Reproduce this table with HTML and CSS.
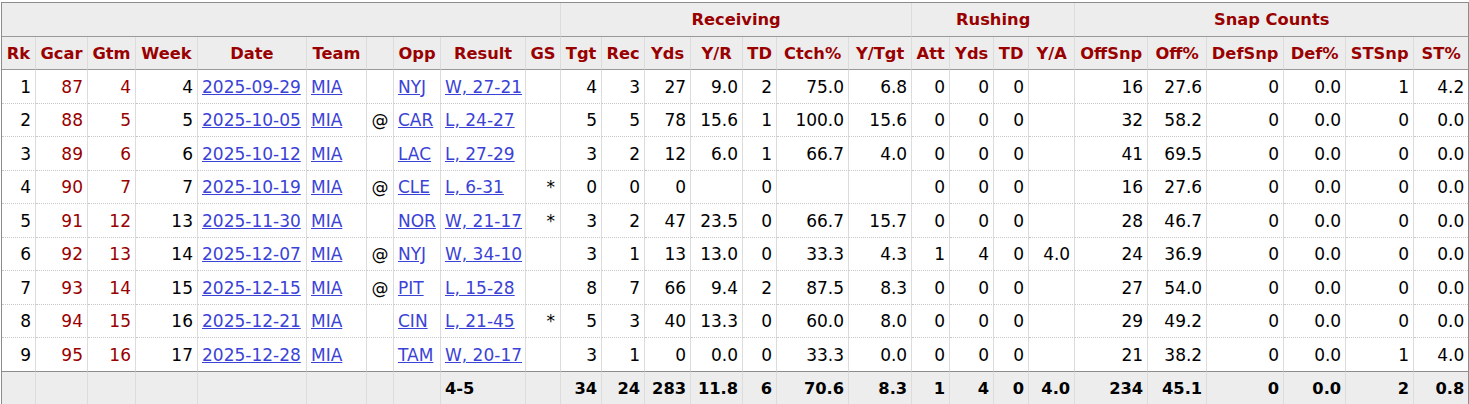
FILE: index.html
```html
<!DOCTYPE html>
<html>
<head>
<meta charset="utf-8">
<title>Game Log</title>
<link rel="stylesheet" href="styles.css">
</head>
<body>
<table class="stats">
  <colgroup>
    <col class="w34"><col class="w52"><col class="w48"><col class="w62"><col class="w109"><col class="w60"><col class="w27"><col class="w47"><col class="w85"><col class="w35">
    <col class="w41"><col class="w43"><col class="w46"><col class="w52"><col class="w34"><col class="w72"><col class="w63">
    <col class="w38"><col class="w44"><col class="w35"><col class="w46">
    <col class="w73"><col class="w59"><col class="w77"><col class="w62"><col class="w68"><col class="w54">
  </colgroup>
  <thead>
    <tr class="over">
      <th colspan="10"></th>
      <th colspan="7">Receiving</th>
      <th colspan="4">Rushing</th>
      <th colspan="6">Snap Counts</th>
    </tr>
    <tr class="heads">
      <th>Rk</th><th>Gcar</th><th>Gtm</th><th>Week</th><th>Date</th><th>Team</th><th></th><th>Opp</th><th>Result</th><th>GS</th>
      <th>Tgt</th><th>Rec</th><th>Yds</th><th>Y/R</th><th>TD</th><th>Ctch%</th><th>Y/Tgt</th>
      <th>Att</th><th>Yds</th><th>TD</th><th>Y/A</th>
      <th>OffSnp</th><th>Off%</th><th>DefSnp</th><th>Def%</th><th>STSnp</th><th>ST%</th>
    </tr>
  </thead>
  <tbody>
    <tr>
      <td class="r">1</td><td class="r red">87</td><td class="r red">4</td><td class="r">4</td><td><a href="#">2025-09-29</a></td><td><a href="#">MIA</a></td><td class="c"></td><td><a href="#">NYJ</a></td><td><a href="#">W, 27-21</a></td><td class="r gs"></td>
      <td class="r">4</td><td class="r">3</td><td class="r">27</td><td class="r">9.0</td><td class="r">2</td><td class="r">75.0</td><td class="r">6.8</td>
      <td class="r">0</td><td class="r">0</td><td class="r">0</td><td class="r"></td>
      <td class="r">16</td><td class="r">27.6</td><td class="r">0</td><td class="r">0.0</td><td class="r">1</td><td class="r">4.2</td>
    </tr>
    <tr>
      <td class="r">2</td><td class="r red">88</td><td class="r red">5</td><td class="r">5</td><td><a href="#">2025-10-05</a></td><td><a href="#">MIA</a></td><td class="c">@</td><td><a href="#">CAR</a></td><td><a href="#">L, 24-27</a></td><td class="r gs"></td>
      <td class="r">5</td><td class="r">5</td><td class="r">78</td><td class="r">15.6</td><td class="r">1</td><td class="r">100.0</td><td class="r">15.6</td>
      <td class="r">0</td><td class="r">0</td><td class="r">0</td><td class="r"></td>
      <td class="r">32</td><td class="r">58.2</td><td class="r">0</td><td class="r">0.0</td><td class="r">0</td><td class="r">0.0</td>
    </tr>
    <tr>
      <td class="r">3</td><td class="r red">89</td><td class="r red">6</td><td class="r">6</td><td><a href="#">2025-10-12</a></td><td><a href="#">MIA</a></td><td class="c"></td><td><a href="#">LAC</a></td><td><a href="#">L, 27-29</a></td><td class="r gs"></td>
      <td class="r">3</td><td class="r">2</td><td class="r">12</td><td class="r">6.0</td><td class="r">1</td><td class="r">66.7</td><td class="r">4.0</td>
      <td class="r">0</td><td class="r">0</td><td class="r">0</td><td class="r"></td>
      <td class="r">41</td><td class="r">69.5</td><td class="r">0</td><td class="r">0.0</td><td class="r">0</td><td class="r">0.0</td>
    </tr>
    <tr>
      <td class="r">4</td><td class="r red">90</td><td class="r red">7</td><td class="r">7</td><td><a href="#">2025-10-19</a></td><td><a href="#">MIA</a></td><td class="c">@</td><td><a href="#">CLE</a></td><td><a href="#">L, 6-31</a></td><td class="r gs">*</td>
      <td class="r">0</td><td class="r">0</td><td class="r">0</td><td class="r"></td><td class="r">0</td><td class="r"></td><td class="r"></td>
      <td class="r">0</td><td class="r">0</td><td class="r">0</td><td class="r"></td>
      <td class="r">16</td><td class="r">27.6</td><td class="r">0</td><td class="r">0.0</td><td class="r">0</td><td class="r">0.0</td>
    </tr>
    <tr>
      <td class="r">5</td><td class="r red">91</td><td class="r red">12</td><td class="r">13</td><td><a href="#">2025-11-30</a></td><td><a href="#">MIA</a></td><td class="c"></td><td><a href="#">NOR</a></td><td><a href="#">W, 21-17</a></td><td class="r gs">*</td>
      <td class="r">3</td><td class="r">2</td><td class="r">47</td><td class="r">23.5</td><td class="r">0</td><td class="r">66.7</td><td class="r">15.7</td>
      <td class="r">0</td><td class="r">0</td><td class="r">0</td><td class="r"></td>
      <td class="r">28</td><td class="r">46.7</td><td class="r">0</td><td class="r">0.0</td><td class="r">0</td><td class="r">0.0</td>
    </tr>
    <tr>
      <td class="r">6</td><td class="r red">92</td><td class="r red">13</td><td class="r">14</td><td><a href="#">2025-12-07</a></td><td><a href="#">MIA</a></td><td class="c">@</td><td><a href="#">NYJ</a></td><td><a href="#">W, 34-10</a></td><td class="r gs"></td>
      <td class="r">3</td><td class="r">1</td><td class="r">13</td><td class="r">13.0</td><td class="r">0</td><td class="r">33.3</td><td class="r">4.3</td>
      <td class="r">1</td><td class="r">4</td><td class="r">0</td><td class="r">4.0</td>
      <td class="r">24</td><td class="r">36.9</td><td class="r">0</td><td class="r">0.0</td><td class="r">0</td><td class="r">0.0</td>
    </tr>
    <tr>
      <td class="r">7</td><td class="r red">93</td><td class="r red">14</td><td class="r">15</td><td><a href="#">2025-12-15</a></td><td><a href="#">MIA</a></td><td class="c">@</td><td><a href="#">PIT</a></td><td><a href="#">L, 15-28</a></td><td class="r gs"></td>
      <td class="r">8</td><td class="r">7</td><td class="r">66</td><td class="r">9.4</td><td class="r">2</td><td class="r">87.5</td><td class="r">8.3</td>
      <td class="r">0</td><td class="r">0</td><td class="r">0</td><td class="r"></td>
      <td class="r">27</td><td class="r">54.0</td><td class="r">0</td><td class="r">0.0</td><td class="r">0</td><td class="r">0.0</td>
    </tr>
    <tr>
      <td class="r">8</td><td class="r red">94</td><td class="r red">15</td><td class="r">16</td><td><a href="#">2025-12-21</a></td><td><a href="#">MIA</a></td><td class="c"></td><td><a href="#">CIN</a></td><td><a href="#">L, 21-45</a></td><td class="r gs">*</td>
      <td class="r">5</td><td class="r">3</td><td class="r">40</td><td class="r">13.3</td><td class="r">0</td><td class="r">60.0</td><td class="r">8.0</td>
      <td class="r">0</td><td class="r">0</td><td class="r">0</td><td class="r"></td>
      <td class="r">29</td><td class="r">49.2</td><td class="r">0</td><td class="r">0.0</td><td class="r">0</td><td class="r">0.0</td>
    </tr>
    <tr>
      <td class="r">9</td><td class="r red">95</td><td class="r red">16</td><td class="r">17</td><td><a href="#">2025-12-28</a></td><td><a href="#">MIA</a></td><td class="c"></td><td><a href="#">TAM</a></td><td><a href="#">W, 20-17</a></td><td class="r gs"></td>
      <td class="r">3</td><td class="r">1</td><td class="r">0</td><td class="r">0.0</td><td class="r">0</td><td class="r">33.3</td><td class="r">0.0</td>
      <td class="r">0</td><td class="r">0</td><td class="r">0</td><td class="r"></td>
      <td class="r">21</td><td class="r">38.2</td><td class="r">0</td><td class="r">0.0</td><td class="r">1</td><td class="r">4.0</td>
    </tr>
  </tbody>
  <tfoot>
    <tr>
      <td></td><td></td><td></td><td></td><td></td><td></td><td></td><td></td><td>4-5</td><td></td>
      <td class="r">34</td><td class="r">24</td><td class="r">283</td><td class="r">11.8</td><td class="r">6</td><td class="r">70.6</td><td class="r">8.3</td>
      <td class="r">1</td><td class="r">4</td><td class="r">0</td><td class="r">4.0</td>
      <td class="r">234</td><td class="r">45.1</td><td class="r">0</td><td class="r">0.0</td><td class="r">2</td><td class="r">0.8</td>
    </tr>
  </tfoot>
</table>
</body>
</html>
```

FILE: styles.css
```css
html, body {
  margin: 0;
  padding: 0;
  background: #fff;
}

body {
  padding: 2px 0 0 1px;
  font-family: "DejaVu Sans", Verdana, sans-serif;
  color: #000;
}

.stats {
  table-layout: fixed;
  width: 1468px;
  border-collapse: separate;
  border-spacing: 0;
  border: 1px solid #8c8c8c;
  font-size: 17px;
}

.w27 { width: 27px; }
.w34 { width: 34px; }
.w35 { width: 35px; }
.w38 { width: 38px; }
.w41 { width: 41px; }
.w43 { width: 43px; }
.w44 { width: 44px; }
.w46 { width: 46px; }
.w47 { width: 47px; }
.w48 { width: 48px; }
.w52 { width: 52px; }
.w54 { width: 54px; }
.w59 { width: 59px; }
.w60 { width: 60px; }
.w62 { width: 62px; }
.w63 { width: 63px; }
.w68 { width: 68px; }
.w72 { width: 72px; }
.w73 { width: 73px; }
.w77 { width: 77px; }
.w85 { width: 85px; }
.w109 { width: 109px; }

.stats th,
.stats td {
  padding: 1px 4px 0;
  border-right: 1px solid #dcdcdc;
  white-space: nowrap;
  overflow: hidden;
  line-height: 20px;
  vertical-align: middle;
}

.stats th:last-child,
.stats td:last-child {
  border-right: none;
}

.stats thead th {
  background: #ededed;
  color: #990000;
  font-weight: bold;
  font-size: 16.3px;
  text-align: center;
  border-bottom: 1px solid #999;
}

.stats tr.over {
  height: 34px;
}

.stats tr.heads {
  height: 33px;
}

.stats tbody tr {
  height: 33.5px;
}

.stats tbody td {
  border-bottom: 1px dotted #c8c8c8;
  text-align: left;
}

.stats tbody tr:last-child td {
  border-bottom: 1px solid #8c8c8c;
}

.stats tfoot tr {
  height: 34px;
}

.stats tfoot td {
  background: #ededed;
  font-weight: bold;
  font-size: 16.3px;
  text-align: left;
}

.stats .r {
  text-align: right;
}

.stats .c {
  text-align: center;
}

.stats .red {
  color: #990000;
}

.stats .gs {
  padding-right: 5px;
}

.stats a {
  color: #3b42d6;
  text-decoration: underline;
}
```
